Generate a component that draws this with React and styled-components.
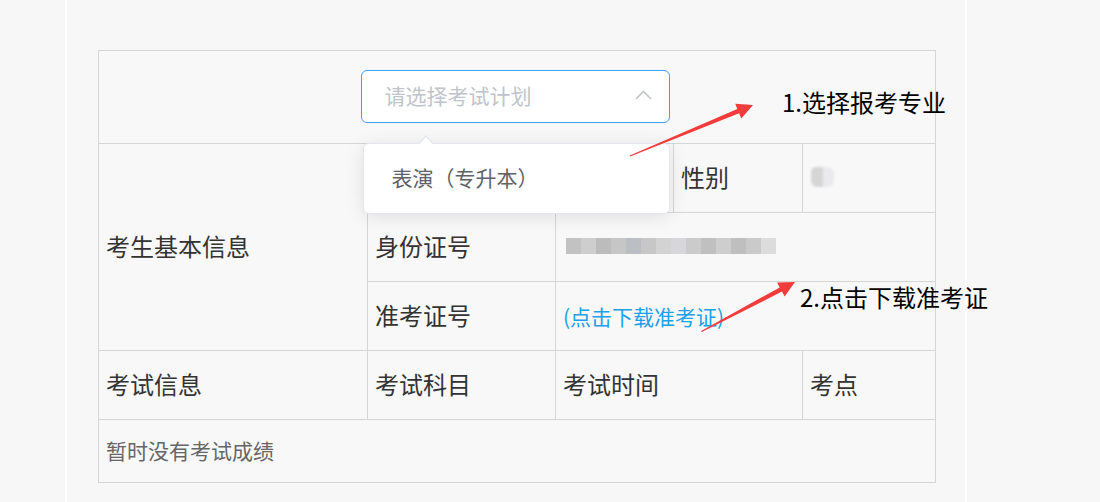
import styled, { createGlobalStyle } from "styled-components";

const GlobalStyle = createGlobalStyle`
  body {
    margin: 0;
    background: #f7f7f7;
    font-family: "Noto Sans CJK SC", "Noto Sans", sans-serif;
  }
`;

const idBlocks = [
  "#c2c2c2", "#cecece", "#bcbcbc", "#c6c6c6", "#bbbfc3", "#c7c7c7", "#d3d3d3",
  "#d7d7db", "#cbcbcb", "#c0c0c0", "#cecece", "#bfbfbf", "#cacaca", "#dcdcdc",
];

// tapered screenshot-style arrow, tail thin, head at the tip
const arrowPoints = (x1, y1, x2, y2, head = 16, wing = 8, tailW = 0.6, neckW = 2.4) => {
  const len = Math.hypot(x2 - x1, y2 - y1);
  const ux = (x2 - x1) / len;
  const uy = (y2 - y1) / len;
  const nx = -uy;
  const ny = ux;
  const bx = x2 - ux * head;
  const by = y2 - uy * head;
  const pts = [
    [x1 + nx * tailW, y1 + ny * tailW],
    [bx + nx * neckW, by + ny * neckW],
    [bx + nx * wing, by + ny * wing],
    [x2, y2],
    [bx - nx * wing, by - ny * wing],
    [bx - nx * neckW, by - ny * neckW],
    [x1 - nx * tailW, y1 - ny * tailW],
  ];
  return pts.map((p) => p.map((v) => v.toFixed(1)).join(",")).join(" ");
};

const App = () => {
  return (
    <Page>
      <GlobalStyle />
      <Content>
        <InfoTable>
          <colgroup>
            <col style={{ width: 269 }} />
            <col style={{ width: 188 }} />
            <col style={{ width: 118 }} />
            <col style={{ width: 129 }} />
            <col style={{ width: 133 }} />
          </colgroup>
          <tbody>
            <Row $h={93}>
              <SelectCell colSpan={5}>
                <SelectWrap>
                  <SelectBox>
                    <Placeholder>请选择考试计划</Placeholder>
                    <svg width="17" height="10" viewBox="0 0 17 10">
                      <polyline points="1,9 8.5,1.5 16,9" fill="none" stroke="#c0c4cc" strokeWidth="1.6" />
                    </svg>
                  </SelectBox>
                  <Dropdown>
                    <DropdownItem>表演（专升本）</DropdownItem>
                  </Dropdown>
                </SelectWrap>
              </SelectCell>
            </Row>
            <Row $h={69}>
              <Cell rowSpan={3}>考生基本信息</Cell>
              <Cell></Cell>
              <Cell></Cell>
              <Cell>性别</Cell>
              <Cell>
                <Smudge>
                  <span />
                  <span />
                </Smudge>
              </Cell>
            </Row>
            <Row $h={69}>
              <Cell>身份证号</Cell>
              <Cell colSpan={3}>
                <Mosaic>
                  {idBlocks.map((c, i) => (
                    <MosaicBlock key={i} $c={c} />
                  ))}
                </Mosaic>
              </Cell>
            </Row>
            <Row $h={69}>
              <Cell>准考证号</Cell>
              <Cell colSpan={3}>
                <DownloadLink href="#">(点击下载准考证)</DownloadLink>
              </Cell>
            </Row>
            <Row $h={69}>
              <Cell>考试信息</Cell>
              <Cell>考试科目</Cell>
              <Cell colSpan={2}>考试时间</Cell>
              <Cell>考点</Cell>
            </Row>
            <Row $h={63}>
              <NoteCell colSpan={5}>暂时没有考试成绩</NoteCell>
            </Row>
          </tbody>
        </InfoTable>
      </Content>

      <ArrowLayer width="1100" height="502" viewBox="0 0 1100 502">
        <polygon points={arrowPoints(630, 156, 753, 105)} />
        <polygon points={arrowPoints(701.5, 331.5, 795, 282)} />
      </ArrowLayer>
      <Annotation $x={782} $y={90}>1.选择报考专业</Annotation>
      <Annotation $x={800} $y={285}>2.点击下载准考证</Annotation>
    </Page>
  );
};

export default App;

const Page = styled.div`
  position: relative;
  width: 1100px;
  height: 502px;
  overflow: hidden;
`;

const Content = styled.div`
  box-sizing: border-box;
  margin-left: 65px;
  width: 902px;
  height: 502px;
  border-left: 2px solid #ffffff;
  border-right: 2px solid #ffffff;
  padding: 50px 0 0 31px;
`;

const InfoTable = styled.table`
  width: 837px;
  table-layout: fixed;
  border-collapse: collapse;
  background: #f8f8f8;
  color: #333333;
`;

const Row = styled.tr`
  height: ${(p) => p.$h}px;
`;

const Cell = styled.td`
  border: 1px solid #d6d6d6;
  padding: 0 7px 2px;
  font-size: 24px;
  line-height: 30px;
  vertical-align: middle;
  text-align: left;
`;

const SelectCell = styled(Cell)`
  text-align: center;
  padding-bottom: 0;
`;

const NoteCell = styled(Cell)`
  font-size: 21px;
  color: #666666;
`;

const SelectWrap = styled.div`
  position: relative;
  display: inline-block;
  vertical-align: middle;
  margin: -2px 0 0 -4px;
`;

const SelectBox = styled.div`
  box-sizing: border-box;
  width: 309px;
  height: 53px;
  display: flex;
  align-items: center;
  justify-content: space-between;
  padding: 0 17px 2px 23px;
  background: #ffffff;
  border: 1px solid #409eff;
  border-radius: 6px;
`;

const Placeholder = styled.span`
  font-size: 21px;
  color: #c0c4cc;
`;

const Dropdown = styled.div`
  position: absolute;
  z-index: 10;
  top: 73px;
  left: 2px;
  box-sizing: border-box;
  width: 307px;
  padding: 8px 0;
  background: #ffffff;
  border: 1px solid #e4e7ed;
  border-radius: 6px;
  box-shadow: 0 3px 18px rgba(0, 0, 0, 0.1);
  text-align: left;
  &::before,
  &::after {
    content: "";
    position: absolute;
    left: 55px;
    width: 0;
    height: 0;
    border-left: 7px solid transparent;
    border-right: 7px solid transparent;
  }
  &::before {
    top: -9px;
    border-bottom: 8px solid #e4e7ed;
  }
  &::after {
    top: -7px;
    border-bottom: 8px solid #ffffff;
  }
`;

const DropdownItem = styled.div`
  height: 51px;
  display: flex;
  align-items: center;
  padding: 0 28px 2px;
  font-size: 21px;
  color: #606266;
`;

const Smudge = styled.div`
  display: flex;
  margin-left: 1px;
  filter: blur(1px);
  span {
    display: block;
    width: 12px;
    height: 20px;
    background: #d6d6d6;
    border-radius: 5px 0 0 6px;
  }
  span + span {
    width: 11px;
    background: #eaeaee;
    border-radius: 0 6px 6px 0;
  }
`;

const Mosaic = styled.div`
  display: flex;
  margin-left: 3px;
  height: 16px;
`;

const MosaicBlock = styled.span`
  display: block;
  width: 15px;
  height: 16px;
  background: ${(p) => p.$c};
`;

const DownloadLink = styled.a`
  font-size: 21px;
  color: #20a0e8;
  text-decoration: none;
`;

const ArrowLayer = styled.svg`
  position: absolute;
  top: 0;
  left: 0;
  pointer-events: none;
  z-index: 20;
  polygon {
    fill: #f43b3b;
  }
`;

const Annotation = styled.div`
  position: absolute;
  z-index: 21;
  left: ${(p) => p.$x}px;
  top: ${(p) => p.$y}px;
  font-size: 24px;
  line-height: 24px;
  color: #000000;
  white-space: nowrap;
`;
